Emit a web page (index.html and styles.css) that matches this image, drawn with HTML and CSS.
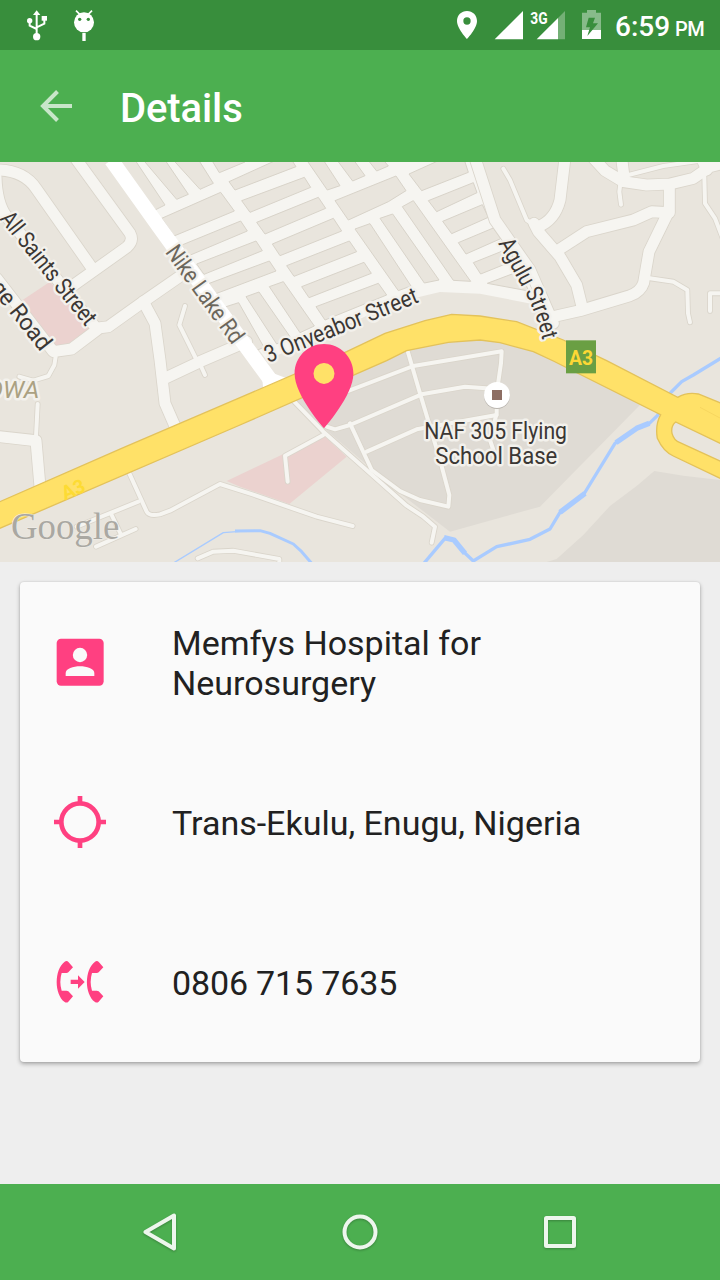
FILE: index.html
```html
<!DOCTYPE html>
<html lang="en">
<head>
<meta charset="utf-8">
<title>Details</title>
<link rel="stylesheet" href="styles.css">
</head>
<body>
<div class="screen">
  <header class="status">
    <svg class="s-usb" viewBox="78 27 66 99"><g fill="none" stroke="#fff" stroke-width="6"><path d="M110 40V108M89 64V77L110 87M133 57V71L110 82"/></g><g fill="#fff"><path d="M110 31L121 45H99Z"/><circle cx="89" cy="62" r="8"/><rect x="125" y="48" width="16" height="14"/><circle cx="110" cy="110" r="11"/></g></svg>
    <svg class="s-bot" viewBox="219 27 66 99"><path d="M228 32L240 44M276 32L264 44" stroke="#fff" stroke-width="5"/><circle cx="252" cy="67" r="30" fill="#fff"/><circle cx="239" cy="58" r="5" fill="#388e3c"/><circle cx="265" cy="58" r="5" fill="#388e3c"/><rect x="247" y="99" width="10" height="24" fill="#fff"/></svg>
    <span class="spring"></span>
    <svg class="s-pin" viewBox="48 27 66 99"><path fill="#fff" fill-rule="evenodd" d="M81 33C64 33 51 46 51 63C51 86 81 117 81 117S111 86 111 63C111 46 98 33 81 33ZM81 52a11 11 0 1 1 0 22a11 11 0 1 1 0-22Z"/></svg>
    <svg class="s-sig" viewBox="162 27 90 99"><path fill="#fff" d="M249 33V118H164Z"/></svg>
    <svg class="s-3g" viewBox="270 27 108 99"><path fill="#fff" opacity=".3" d="M354 54L375 33V118H354Z"/><path fill="#fff" d="M354 54V118H290Z"/><text x="271" y="71" class="net" textLength="52" lengthAdjust="spacingAndGlyphs">3G</text></svg>
    <svg class="s-bat" viewBox="423 27 63 99"><path fill="#fff" opacity=".4" d="M441 30H468V38H483V90H426V38H441Z"/><path fill="#fff" d="M426 90H483V117H426Z"/><path fill="#388e3c" d="M446 53H465L459 70H474L442 108L450 82H438Z"/></svg>
    <span class="time">6:59</span><span class="ampm">PM</span>
  </header>
  <div class="appbar">
    <svg class="back" viewBox="0 0 32 32"><path d="M32 16H3M17.500 1.500L3 16L17.500 30.500" fill="none" stroke="#c8e6c9" stroke-width="4"/></svg>
    <h1>Details</h1>
  </div>
  <svg class="map" viewBox="0 6 2160 1200">
    <defs>
      <g id="roads">
        <g class="w34">
          <path d="M-10 30Q70 30 108 85L280 330"/>
          <path d="M226 -6L390 220Q402 243 380 262L200 390"/>
          <path d="M-12 50Q-10 130 20 170L285 500"/>
          <path d="M-10 355L160 575L215 567L300 503L325 500L430 425L560 335"/>
          <path d="M430 425L465 490L480 600L495 730L530 810"/>
          <path d="M495 655L600 605L740 545"/>
          <path d="M-10 829L108 842L120 980"/>
          <path d="M1695 -6L1680 120Q1665 180 1615 200"/>
          <path d="M1602 190L1615 215L1680 290L1730 375L1746 440"/>
          <path d="M1675 270L1760 215L1900 180L1955 155L2008 158"/>
          <path d="M1780 -6L1815 32L1870 65L1940 75L2010 72L2080 55L2130 20L2170 10"/>
          <path d="M1865 -6L1872 50"/><path d="M2105 -6L2120 30"/>
          <path d="M2008 80V150L1947 275L1931 368Q1922 395 1890 407L1740 452L1650 472"/>
          <path d="M1425 -6L1485 180L1590 330L1660 490"/>
        </g>
        <g class="w12">
          <path d="M555 438L538 495L590 600M600 612L615 645"/>
          <path d="M167 590L163 615L145 648L100 662L58 650"/>
          <path d="M113 732L108 830"/>
          <path d="M388 940L440 1055Q448 1070 480 1063L510 1052L660 972L760 1004L950 1070L1058 1098"/>
          <path d="M415 1025L230 1100M335 1065L362 1122M288 1160L407 1107"/>
          <path d="M593 1195L640 1175L700 1172L838 1197V1215"/>
          <path d="M1510 26L1530 60L1580 180L1602 195"/>
          <path d="M1885 45L1990 18L2100 2"/>
          <path d="M1861 70L1858 95L1863 134"/>
          <path d="M2113 50L2115 130L2145 175L2168 235"/>
          <path d="M1950 355L2020 365L2062 390L2064 460L2070 487"/>
          <path d="M2130 453V400H2170"/>
          <path d="M880 722L970 815L1220 1037L1270 1070L1305 1100L1295 1148"/>
          <path d="M970 825L855 887L863 965"/>
          <path d="M980 800L1005 808L1050 795L1265 703L1395 680L1490 687"/>
          <path d="M1000 710L1240 618L1505 574L1503 610L1490 700V760L1470 840L1480 870"/>
          <path d="M1050 790L1115 930L1200 993L1260 1020L1345 1040L1348 1005L1320 900L1260 700L1222 570"/>
          <path d="M1100 875L1250 808L1490 765"/>
        </g>
      </g>
    </defs>
    <rect width="2160" height="1210" fill="#e9e5dd"/>
    <g fill="#ebd2cf"><path d="M60 425L150 365L270 505L200 555L165 560Z"/><path d="M680 963L970 825L1040 890L868 1032L720 980Z"/></g>
    <g fill="#dfdbd4"><path d="M880 725L1200 1000L1350 1115L1620 1040L1920 735L1600 560L1400 520L1100 600Z"/><path d="M1640 1206L1670 1197L1750 1125L1830 1038L1910 978L1963 933L2050 947L2160 960V1206Z"/></g>
    <path fill="#f6f5f1" d="M340 0H1425L1490 180L1600 340L1640 440L1440 401L1320 396L1260 410L1140 450L800 600Z"/>
    <g class="blocks">
      <path d="M345 0H405L495 135L465 150Z"/><path d="M430 0H495L565 103L530 118Z"/><path d="M520 0H596L640 70L600 88Z"/>
      <path d="M635 0L658 38L735 6V0Z"/><path d="M687 65L830 0H875L888 20L705 90Z"/>
      <path d="M485 175L662 97L703 153L522 228Z"/><path d="M541 257L722 183L742 213L564 288Z"/><path d="M590 312L768 243L787 272L612 343Z"/><path d="M620 373L808 303L828 333L637 405Z"/>
      <path d="M672 442L716 428L792 562L760 575Z"/><path d="M738 410L777 396L870 530L830 552Z"/><path d="M808 380L850 365L943 498L900 518Z"/>
      <g transform="translate(720 0)">
        <path d="M5 122L193 52L212 82L30 157Z"/><path d="M50 187L235 112L257 145L75 222Z"/><path d="M97 252L280 175L305 213L120 287Z"/><path d="M140 317L328 243L350 275L162 349Z"/><path d="M185 380L372 307L394 340L207 413Z"/><path d="M228 440L415 370L440 405L255 480Z"/>
        <path d="M200 0H250L300 77L262 90Z"/><path d="M291 0H341L375 47L338 63Z"/><path d="M384 0H430L445 18L410 33Z"/><path d="M285 122L468 48L498 92L445 125L325 180Z"/>
        <path d="M345 207L390 191L513 378L475 392Z"/><path d="M420 175L458 162L597 360L553 369Z"/><path d="M487 140L520 122L692 364L640 361Z"/>
        <path d="M507 42L600 0H673L685 37L545 92Z"/><path d="M565 122L700 68L711 98L590 155Z"/><path d="M608 184L727 134L745 172L635 221Z"/><path d="M655 248L760 204L782 236L678 282Z"/><path d="M700 308L800 268L826 300L722 342Z"/><path d="M742 370L840 333L866 393Z"/>
      </g>
    </g>
    <g fill="none" stroke="#a9cbff" stroke-linejoin="round">
      <path stroke-width="4" d="M522 1208L670 1118L720 1114"/>
      <path stroke-width="9" d="M705 1113L780 1112L810 1120L880 1152L905 1175L935 1210"/>
      <path stroke-width="10" d="M2170 590L2080 645L2045 665L2005 705L1972 767L1948 790L1910 805L1845 850L1750 1005L1680 1057L1650 1107L1590 1138L1490 1160L1420 1203L1385 1170L1365 1142L1335 1135L1270 1212"/>
      <path stroke-width="16" d="M1948 790L1910 805L1848 848M1755 1000L1680 1057M1395 1180L1362 1140L1332 1133M2010 700L1995 720"/>
    </g>
    <use href="#roads" class="casing"/>
    <use href="#roads" class="surface"/>
    <path class="main" d="M334 0L480 205L771 605L815 665"/>
    <path fill="#fff" d="M780 585L820 640L860 655L870 680L790 690Z"/>
    <path fill="#ffe168" stroke="#e3c25a" stroke-width="4" d="M-5 1027L370 863L720 713L1040 575L1155 520L1275 482L1355 463L1440 468L1550 485L1690 540L1820 602L2033 712Q2060 696 2095 702L2165 730V852L2027 786Q2012 798 2016 820Q2022 842 2040 848L2165 905V957L2020 888Q1990 875 1972 835Q1965 795 1982 764L1660 603L1600 575L1500 548L1440 540L1345 547L1220 572L1160 602L720 795L-5 1107Z"/>
    <path stroke="#f7d65f" stroke-width="3" d="M2100 742L2160 774"/>
    <rect x="1698" y="541" width="90" height="99" fill="#6a9f43"/>
    <g class="labels">
      <text transform="translate(-2 177) rotate(51.400)" textLength="415" lengthAdjust="spacingAndGlyphs">All Saints Street</text>
      <text text-anchor="end" transform="translate(122 577) rotate(51.500)" textLength="246" lengthAdjust="spacingAndGlyphs">ge Road</text>
      <text fill="#6b665b" transform="translate(494 277) rotate(54)" textLength="345" lengthAdjust="spacingAndGlyphs">Nike Lake Rd</text>
      <text transform="translate(805 609) rotate(-22)" textLength="490" lengthAdjust="spacingAndGlyphs">3 Onyeabor Street</text>
      <path id="agulu" fill="none" d="M1494 250L1566 382Q1604 440 1630 550"/>
      <text class="agulu"><textPath href="#agulu" textLength="322" lengthAdjust="spacingAndGlyphs">Agulu Street</textPath></text>
      <text class="area" x="118" y="715" text-anchor="end">OWA</text>
      <text x="1273" y="836" textLength="428" lengthAdjust="spacingAndGlyphs">NAF 305 Flying</text>
      <text x="1306" y="913" textLength="366" lengthAdjust="spacingAndGlyphs">School Base</text>
    </g>
    <text class="route faint" transform="translate(194 1021) rotate(-23)">A3</text>
    <text class="route" x="1743" y="614" text-anchor="middle">A3</text>
    <ellipse cx="1491" cy="709" rx="39" ry="38" fill="#b9b5af"/>
    <circle cx="1491" cy="705" r="39" fill="#fff"/><rect x="1476" y="690" width="30" height="30" fill="#8d6e63"/>
    <text class="google" x="33" y="1137" textLength="325" lengthAdjust="spacingAndGlyphs">Google</text>
    <path transform="translate(820.800 526.800) scale(12.600)" fill="#ff4081" fill-rule="evenodd" d="M12 2C8.130 2 5 5.130 5 9c0 5.250 7 13 7 13s7-7.750 7-13c0-3.870-3.130-7-7-7zm0 9.500a2.500 2.500 0 1 1 0-5 2.500 2.500 0 0 1 0 5z"/>
  </svg>
  <main class="content">
    <section class="card">
      <div class="row">
        <svg class="icon" viewBox="120 186 180 180"><rect x="140" y="206" width="141" height="141" rx="13" fill="#ff4081"/><circle cx="210" cy="255" r="21.500" fill="#fafafa"/><path d="M167 318V309C167 296 190 289 210 289S253 296 253 309V318Z" fill="#fafafa"/></svg>
        <p>Memfys Hospital for Neurosurgery</p>
      </div>
      <div class="row">
        <svg class="icon" viewBox="120 666 180 180"><g fill="none" stroke="#ff4081" stroke-width="14"><circle cx="210" cy="756" r="56"/><path d="M210 678V699M210 813V834M132 756H153M267 756H288"/></g></svg>
        <p>Trans-Ekulu, Enugu, Nigeria</p>
      </div>
      <div class="row">
        <svg class="icon" viewBox="120 66 180 180"><g fill="#ff4081"><path id="handset" d="M169 93Q173 93 176 97L189 112L175 127Q173 129 169 129H155Q147 156 155 182H169Q173 182 175 184L189 199L175 215Q170 220 164 216C132 192 132 119 164 95Q167 93 169 93Z"/><use href="#handset" x="91"/><path d="M182 149H204V136L224 156L204 176V162H182Z"/></g></svg>
        <p class="phone">0806 715 7635</p>
      </div>
    </section>
  </main>
  <nav class="nav">
    <svg viewBox="0 0 40 40"><path d="M5.500 20L34 3.500V36.500Z"/></svg>
    <svg viewBox="0 0 40 40"><circle cx="20" cy="20" r="15.500"/></svg>
    <svg viewBox="0 0 40 40"><rect x="6" y="6" width="28" height="28" rx=".5"/></svg>
  </nav>
</div>
</body>
</html>
```
FILE: styles.css
```css
body { margin: 0; font-family: Roboto, "Noto Sans", sans-serif; }
.screen { width: 720px; height: 1280px; display: flex; flex-direction: column; background: #eee; overflow: hidden; }
svg { display: block; flex: none; }

.status { height: 50px; box-sizing: border-box; padding: 0 17px 0 26px; display: flex; background: #388e3c; color: #fff; }
.status svg { height: 33px; margin-top: 9px; }
.s-usb, .s-bot, .s-pin { width: 22px; }
.s-bot { margin-left: 25px; }
.spring { flex: 1; }
.s-sig { width: 30px; margin-left: 16px; }
.s-3g { width: 36px; margin-left: 6px; }
.s-bat { width: 21px; margin-left: 15px; }
.net { font-size: 48px; font-weight: 700; fill: #fff; }
.time { width: 60px; margin-left: 13px; font-size: 28px; font-weight: 500; line-height: 54px; }
.ampm { width: 28px; font-size: 20px; font-weight: 500; line-height: 59px; letter-spacing: -.4px; }

.appbar { height: 112px; padding-left: 40px; display: flex; align-items: center; background: #4caf50; }
.back { width: 32px; height: 32px; }
.appbar h1 { margin: 6px 0 0 48px; font-size: 40px; font-weight: 500; line-height: 48px; letter-spacing: -.1px; color: #fff; }

.map { width: 720px; height: 400px; }
.w34 { --w: 33px; }
.w12 { --w: 12px; }
#roads path { fill: none; stroke-linejoin: round; stroke-linecap: round; stroke-width: calc(var(--w) + var(--edge)); }
.casing { stroke: #dad5cb; --edge: 5px; }
.surface { stroke: #f6f5f1; --edge: 0px; }
.main { fill: none; stroke: #fff; stroke-width: 44px; stroke-linejoin: round; }
.blocks { fill: #e9e5dd; stroke: #d8d3c9; stroke-width: 3px; }
.labels { font-size: 71px; fill: #3b3734; }
.labels text { stroke: #f3f1ec; stroke-width: 15px; stroke-linejoin: round; paint-order: stroke; }
.labels .area { fill: #aba182; font-size: 74px; font-style: italic; }
.route { font-size: 58px; font-weight: 700; fill: #fdd835; }
.faint { fill: #fddb33; }
.google { font-family: "Liberation Serif", serif; font-size: 112px; fill: #aaa8a2; stroke: #f0eee9; stroke-width: 3px; paint-order: stroke; }

.content { flex: 1; padding: 20px; }
.card { background: #fafafa; border-radius: 4px; box-shadow: 0 2px 4px rgba(0,0,0,.3), 0 0 2px rgba(0,0,0,.12); }
.row { height: 160px; box-sizing: border-box; padding: 0 100px 0 30px; display: flex; align-items: center; gap: 62px; }
.icon { width: 60px; height: 60px; }
.row p { margin: 2px 0 0; font-size: 34px; line-height: 40px; color: #212121; }
.row .phone { letter-spacing: -.15px; }

.nav { height: 96px; padding: 0 140px; display: flex; justify-content: space-between; align-items: center; background: #4caf50; }
.nav svg { width: 40px; height: 40px; fill: none; stroke: #edf6ed; stroke-width: 4px; stroke-linejoin: round; filter: drop-shadow(0 1px 1px rgba(0,0,0,.25)); }
```
